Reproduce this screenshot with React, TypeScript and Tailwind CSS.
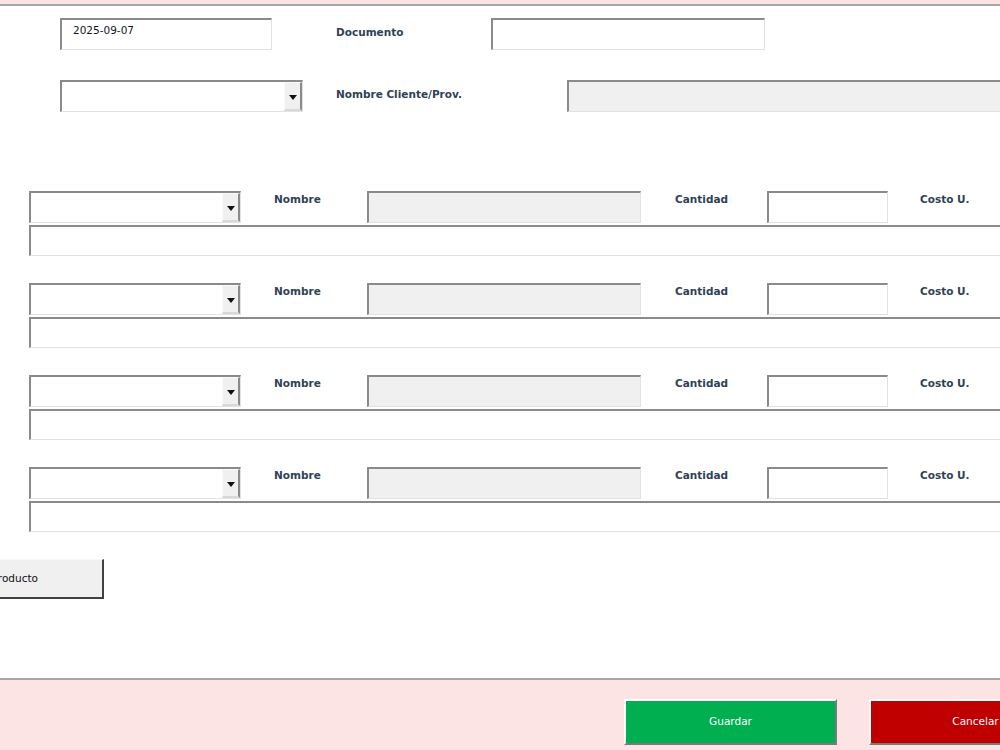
import React from "react";

const label = "shrink-0 text-[10.5px] font-bold leading-[14px] text-[#2f4256] whitespace-nowrap";
const sunken = "border-t-2 border-l-2 border-t-[#8a8a8a] border-l-[#8a8a8a] border-r border-b border-r-[#e2e2e2] border-b-[#e2e2e2]";

function Field({ className, gray, children }: { className?: string; gray?: boolean; children?: React.ReactNode }) {
  return (
    <div className={`${sunken} shrink-0 ${gray ? "bg-[#f0f0f0]" : "bg-white"} ${className ?? ""}`}>{children}</div>
  );
}

// combo box with the little raised drop button at the right
function Combo({ className }: { className?: string }) {
  return (
    <div className={`${sunken} flex shrink-0 bg-white ${className ?? ""}`}>
      <div className="flex-1" />
      <div className="flex w-[18px] items-center justify-center border-t border-l border-t-[#fafafa] border-l-[#fafafa] border-r-2 border-b-2 border-r-[#8a8a8a] border-b-[#d8d8d8] bg-[#f0f0f0] pt-[2px]">
        <svg width="8" height="5" viewBox="0 0 8 5">
          <path d="M0 0h8L4 5z" fill="#111" />
        </svg>
      </div>
    </div>
  );
}

function ProductRow() {
  return (
    <div className="flex flex-col">
      <div className="flex items-start">
        <Combo className="ml-[29px] h-[32px] w-[212px]" />
        <div className={`${label} ml-[33px] w-[93px] pt-[1px]`}>Nombre</div>
        <Field gray className="h-[32px] w-[274px]" />
        <div className={`${label} ml-[34px] w-[92px] pt-[1px]`}>Cantidad</div>
        <Field className="h-[32px] w-[121px]" />
        <div className={`${label} ml-[32px] pt-[1px]`}>Costo U.</div>
      </div>
      <Field className="ml-[29px] mt-[2px] h-[31px] w-[1000px]" />
    </div>
  );
}

export default function App() {
  return (
    <div className="flex h-[750px] w-[1000px] flex-col overflow-hidden bg-white font-['DejaVu_Sans',sans-serif]">
      <div className="h-[6px] shrink-0 border-b-2 border-[#a6a6a6] bg-[#fce4e4]" />

      <div className="mt-[12px] flex items-start">
        <Field className="ml-[60px] h-[32px] w-[212px] pl-[11px] pt-[3px] text-[10.5px] leading-[14px] text-[#101828]">
          2025-09-07
        </Field>
        <div className={`${label} ml-[64px] w-[155px] pt-[7px]`}>Documento</div>
        <Field className="h-[32px] w-[274px]" />
      </div>

      <div className="mt-[30px] flex items-start">
        <Combo className="ml-[60px] h-[32px] w-[243px]" />
        <div className={`${label} ml-[33px] w-[231px] pt-[7px]`}>Nombre Cliente/Prov.</div>
        <Field gray className="h-[32px] w-[500px]" />
      </div>

      <div className="mt-[79px] flex flex-col gap-[27px]">
        <ProductRow />
        <ProductRow />
        <ProductRow />
        <ProductRow />
      </div>

      <div className="mt-[27px] flex">
        <button
          type="button"
          className="-ml-[126px] flex h-[40px] w-[230px] shrink-0 items-center justify-end border-t border-l border-t-[#fafafa] border-l-[#fafafa] border-r-2 border-b-2 border-r-[#404040] border-b-[#404040] bg-[#f0f0f0] pr-[64px] text-[10.5px] text-[#111]"
        >
          Agregar Producto
        </button>
      </div>

      <div className="mt-auto flex h-[72px] shrink-0 items-start border-t-2 border-[#a6a6a6] bg-[#fce4e4] pt-[19px]">
        <button
          type="button"
          className="ml-[624px] h-[46px] w-[213px] shrink-0 border-t-2 border-l-2 border-t-white border-l-white border-r-2 border-b-2 border-r-[#7a7a7a] border-b-[#7a7a7a] bg-[#00b050] text-[10.5px] text-white"
        >
          Guardar
        </button>
        <button
          type="button"
          className="ml-[32px] h-[46px] w-[213px] shrink-0 border-t-2 border-l-2 border-t-white border-l-white border-r-2 border-b-2 border-r-[#7a7a7a] border-b-[#7a7a7a] bg-[#c00000] text-[10.5px] text-white"
        >
          Cancelar
        </button>
      </div>
    </div>
  );
}
